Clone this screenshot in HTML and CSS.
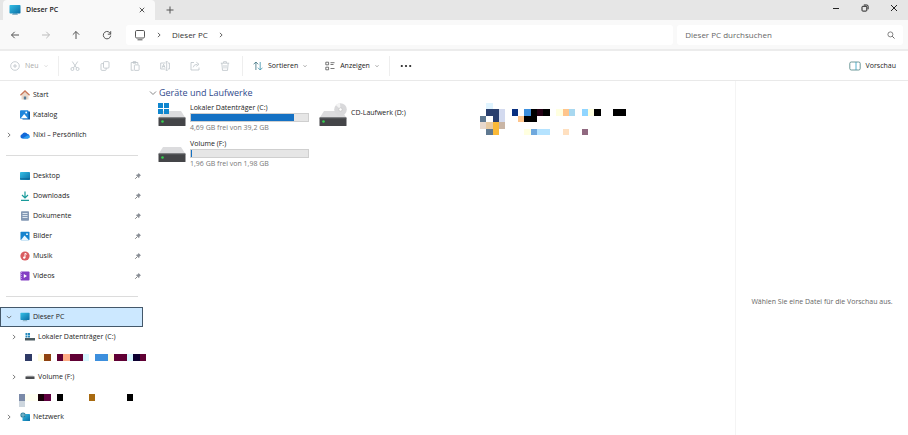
FILE: index.html
```html
<!DOCTYPE html>
<html lang="de">
<head>
    <meta charset="UTF-8">
    <meta name="viewport" content="width=device-width, initial-scale=1.0">
    <title>Dieser PC</title>
    <link rel="stylesheet" href="styles.css">
</head>
<body>
    <!-- Shared icons -->
    <svg class="sprite" aria-hidden="true">
        <defs>
            <linearGradient id="screen" x1="0" y1="0" x2="1" y2="1">
                <stop offset="0" stop-color="#35c0e6"/>
                <stop offset="1" stop-color="#0a6ea6"/>
            </linearGradient>
            <symbol id="pc" viewBox="0 0 12 12">
                <path d="M4 9h4l1 2H3z" fill="#8fb5c8"/>
                <rect x="0.5" y="1" width="11" height="8.5" rx="0.8" fill="url(#screen)"/>
            </symbol>
            <symbol id="chevron-right" viewBox="0 0 8 8">
                <path d="M2.500 1.200 5.500 4 2.500 6.800" fill="none" stroke="currentColor"/>
            </symbol>
            <symbol id="chevron-down" viewBox="0 0 8 8">
                <path d="M1 2.500 4 5.500 7 2.500" fill="none" stroke="currentColor"/>
            </symbol>
            <symbol id="close" viewBox="0 0 8 8">
                <path d="M1 1l6 6M7 1 1 7" fill="none" stroke="currentColor"/>
            </symbol>
            <symbol id="pin" viewBox="0 0 8 8">
                <path d="M4.600 1 7 3.400 5.800 4 5 6.200 1.800 3 4 2.200z" fill="#8a8f96"/>
                <path d="M3.200 4.800 1.200 6.800" stroke="#666" stroke-width="0.800"/>
            </symbol>
            <symbol id="drive" viewBox="0 0 28 16">
                <path d="M5 0h18l4.500 7H.5z" fill="#dcdcde"/>
                <rect x="0.500" y="6.500" width="27" height="8.500" rx="0.600" fill="#444548"/>
                <path d="M.5 7h27" stroke="#66686b" stroke-width="0.800"/>
                <circle cx="4.500" cy="10.500" r="1.300" fill="#35d04f"/>
            </symbol>
            <symbol id="windows" viewBox="0 0 11 11">
                <path d="M0 0h5v5H0zM6 0h5v5H6zM0 6h5v5H0zM6 6h5v5H6z" fill="#0f86cf"/>
            </symbol>
        </defs>
    </svg>

    <div class="explorer">
        <header>
            <div class="titlebar">
                <div class="tab">
                    <svg class="icon-12"><use href="#pc"/></svg>
                    <span class="tab-title">Dieser PC</span>
                    <button class="tab-close" aria-label="Tab schließen"><svg class="icon-6"><use href="#close"/></svg></button>
                </div>
                <button class="tab-new" aria-label="Neuer Tab">
                    <svg class="icon-8" viewBox="0 0 8 8"><path d="M4 .5v7M.5 4h7" stroke="#555"/></svg>
                </button>
                <div class="window-buttons">
                    <button aria-label="Minimieren"><svg class="icon-8" viewBox="0 0 8 8"><path d="M1 4.500h6" stroke="#222"/></svg></button>
                    <button aria-label="Verkleinern"><svg class="icon-8" viewBox="0 0 8 8"><rect x="1" y="2.300" width="4.800" height="4.800" rx="0.800" fill="none" stroke="#222"/><path d="M2.800 1h3q1.300 0 1.300 1.300v3" fill="none" stroke="#222"/></svg></button>
                    <button aria-label="Schließen"><svg class="icon-8"><use href="#close"/></svg></button>
                </div>
            </div>

            <div class="navbar">
                <div class="nav-buttons">
                    <button aria-label="Zurück"><svg class="icon-10" viewBox="0 0 10 10"><path d="M9 5H1.500M4.700 1.800 1.500 5l3.200 3.200"/></svg></button>
                    <button aria-label="Vorwärts" disabled><svg class="icon-10" viewBox="0 0 10 10"><path d="M1 5h7.500M5.300 1.800 8.500 5 5.300 8.200"/></svg></button>
                    <button aria-label="Nach oben"><svg class="icon-10" viewBox="0 0 10 10"><path d="M5 9V1.500M1.800 4.700 5 1.500l3.200 3.200"/></svg></button>
                    <button aria-label="Aktualisieren"><svg class="icon-10" viewBox="0 0 10 10"><path d="M8.600 4.200A3.700 3.700 0 1 0 8.700 5.600M8.700 1.200v3H5.800"/></svg></button>
                </div>
                <nav class="address" aria-label="Pfad">
                    <svg class="icon-12" viewBox="0 0 12 12"><rect x="1.500" y="1.500" width="9" height="7.500" rx="1.200" fill="none" stroke="#555"/><path d="M3.500 10.800h5" stroke="#555"/></svg>
                    <svg class="icon-6"><use href="#chevron-right"/></svg>
                    <a href="#">Dieser PC</a>
                    <svg class="icon-6"><use href="#chevron-right"/></svg>
                </nav>
                <div class="search">
                    <input type="search" placeholder="Dieser PC durchsuchen" aria-label="Dieser PC durchsuchen">
                    <svg class="icon-8" viewBox="0 0 8 8"><circle cx="3.400" cy="3.400" r="2.500" fill="none" stroke="#666" stroke-width="0.800"/><path d="M5.200 5.200 7.500 7.500" stroke="#666"/></svg>
                </div>
            </div>

            <div class="toolbar">
                <button class="tool tool-new" disabled>
                    <svg class="icon-10" viewBox="0 0 10 10"><circle cx="5" cy="5" r="4.300"/><path d="M5 3v4M3 5h4"/></svg>
                    Neu
                    <svg class="icon-4"><use href="#chevron-down"/></svg>
                </button>
                <div class="tool-group">
                    <button class="tool" aria-label="Ausschneiden" disabled><svg class="icon-10" viewBox="0 0 10 10"><path d="M2.300.5 6.600 7M7.700.5 3.400 7"/><circle cx="2.400" cy="8" r="1.500"/><circle cx="7.600" cy="8" r="1.500"/></svg></button>
                    <button class="tool" aria-label="Kopieren" disabled><svg class="icon-10" viewBox="0 0 10 10"><rect x="3.500" y="0.600" width="5.500" height="6.500" rx="1"/><path d="M3.500 2.600H1.800q-.8 0-.8.8v5q0 1 1 1h3.200q1 0 1-1V7.100"/></svg></button>
                    <button class="tool" aria-label="Einfügen" disabled><svg class="icon-10" viewBox="0 0 10 10"><path d="M3.600 9.300H1.200V1.500h6.600v1.800M3.200.6h2.600v1.600H3.200z"/><rect x="4.400" y="3.900" width="4.700" height="5.500" rx="0.600"/></svg></button>
                    <button class="tool" aria-label="Umbenennen" disabled><svg class="icon-10" viewBox="0 0 10 10"><path d="M5.500 2H.7v6h4.800M8 2h1.400v6H8M6.700.7v8.600M5.700.7h2M5.700 9.300h2M2.200 6.700l1.400-3.400L5 6.700M2.700 5.600h1.800"/></svg></button>
                    <button class="tool" aria-label="Freigeben" disabled><svg class="icon-10" viewBox="0 0 10 10"><path d="M4 1.500H1v7.500h8V6.500M3.200 6.300q.4-3 4.200-3M6.300 1.200l2.700 2.100-2.700 2"/></svg></button>
                    <button class="tool" aria-label="Löschen" disabled><svg class="icon-10" viewBox="0 0 10 10"><path d="M.8 2.200h8.400M3.600 2V.7h2.800V2M1.800 2.200l.7 7.200h5l.7-7.200M4 4v3.500M6 4v3.500"/></svg></button>
                </div>
                <div class="tool-menus">
                    <button class="tool">
                        <svg class="icon-10" viewBox="0 0 10 10"><path d="M2.900 9V1M.6 3.300 2.900 1l2.300 2.300" stroke="#3a6f7c"/><path d="M7.200 1v8M4.900 6.700 7.200 9l2.300-2.300" stroke="#3c93ad"/></svg>
                        Sortieren
                        <svg class="icon-4"><use href="#chevron-down"/></svg>
                    </button>
                    <button class="tool">
                        <svg class="icon-10" viewBox="0 0 10 10"><path d="M.8 1.200h2.800v2.600H.8zM.8 6.200h2.800v2.600H.8zM5.500 1.700h4M5.500 3.500h3M5.500 7.500h4"/></svg>
                        Anzeigen
                        <svg class="icon-4"><use href="#chevron-down"/></svg>
                    </button>
                </div>
                <button class="tool tool-more" aria-label="Mehr anzeigen">
                    <svg class="icon-12" viewBox="0 0 12 12"><g fill="#222" stroke="none"><circle cx="1.800" cy="6" r="1.100"/><circle cx="6" cy="6" r="1.100"/><circle cx="10.200" cy="6" r="1.100"/></g></svg>
                </button>
                <button class="tool tool-preview">
                    <svg class="icon-12" viewBox="0 0 12 12"><rect x="0.800" y="2" width="10.400" height="8" rx="1.500" stroke="#4a8080"/><path d="M7 2v8" stroke="#2c9fc0"/></svg>
                    Vorschau
                </button>
            </div>
        </header>

        <div class="content">
            <nav class="sidebar" aria-label="Navigationsbereich">
                <ul>
                    <li><a href="#"><span class="expander"></span>
                        <svg class="icon-10" viewBox="0 0 10 10"><path d="M1.500 4.500 5 1.500l3.500 3v5h-7z" fill="#ead9cc"/><path d="M.4 5.200 5 1l4.600 4.200" fill="none" stroke="#c8785a" stroke-width="1.300"/><path d="M3.800 9.500v-3h2.400v3z" fill="#587c98"/></svg>
                        Start</a></li>
                    <li><a href="#"><span class="expander"></span>
                        <svg class="icon-10" viewBox="0 0 10 10"><path d="M2.500 1.500H10v8H2.500z" fill="#0b57a0"/><rect y="0.300" width="8.500" height="8.500" rx="1" fill="#1f86dc"/><path d="M.8 8.200 4.200 4l3.500 4.200z" fill="#fff"/><circle cx="6.200" cy="2.500" r="0.900" fill="#fff"/></svg>
                        Katalog</a></li>
                    <li><a href="#"><span class="expander"><svg class="icon-6"><use href="#chevron-right"/></svg></span>
                        <svg class="icon-10" viewBox="0 0 10 10"><path d="M2.300 8.500a2.200 2.200 0 0 1-.2-4.300A3 3 0 0 1 7.500 4a2.300 2.300 0 0 1 .4 4.500z" fill="#1268d8"/><path d="M2.300 8.500 7.600 5.300q2 .2 2.300 1.700-.3 1.400-2 1.500z" fill="#2b9df0"/></svg>
                        Nixi – Persönlich</a></li>
                </ul>
                <ul>
                    <li><a href="#"><span class="expander"></span>
                        <svg class="icon-10" viewBox="0 0 10 10"><rect y="1" width="10" height="8" rx="0.800" fill="url(#screen)"/><path d="M0 7.800h10" stroke="#0b608e" stroke-width="0.800"/></svg>
                        Desktop<svg class="icon-8 pin"><use href="#pin"/></svg></a></li>
                    <li><a href="#"><span class="expander"></span>
                        <svg class="icon-10" viewBox="0 0 10 10"><path d="M5 .5v6.300M2 4l3 3 3-3M1 9.300h8" fill="none" stroke="#199a9a" stroke-width="1.200"/></svg>
                        Downloads<svg class="icon-8 pin"><use href="#pin"/></svg></a></li>
                    <li><a href="#"><span class="expander"></span>
                        <svg class="icon-10" viewBox="0 0 10 10"><rect x="1" y="0.300" width="8" height="9.400" rx="0.800" fill="#8398b4"/><path d="M2.500 2.500h5M2.500 4.500h5M2.500 6.500h5" stroke="#e5edf5" stroke-width="0.900"/></svg>
                        Dokumente<svg class="icon-8 pin"><use href="#pin"/></svg></a></li>
                    <li><a href="#"><span class="expander"></span>
                        <svg class="icon-10" viewBox="0 0 10 10"><rect x="0.500" y="0.800" width="9" height="8.400" rx="0.800" fill="#1583ce"/><path d="M.8 9.200 4.500 4.500 9 9.200z" fill="#e8f6ff"/><circle cx="7" cy="3.200" r="0.900" fill="#fff"/></svg>
                        Bilder<svg class="icon-8 pin"><use href="#pin"/></svg></a></li>
                    <li><a href="#"><span class="expander"></span>
                        <svg class="icon-10" viewBox="0 0 10 10"><circle cx="5" cy="5" r="4.600" fill="#d95c60"/><path d="M5 6.600V2.300l1.800 1" fill="none" stroke="#fff"/><circle cx="4.200" cy="6.600" r="1.200" fill="#fff"/></svg>
                        Musik<svg class="icon-8 pin"><use href="#pin"/></svg></a></li>
                    <li><a href="#"><span class="expander"></span>
                        <svg class="icon-10" viewBox="0 0 10 10"><rect x="0.500" y="0.500" width="9" height="9" rx="0.800" fill="#8440c4"/><path d="M3.800 3v4l3.200-2z" fill="#fff"/><path d="M1.500 1v8" stroke="#b98ae8" stroke-dasharray="1 1"/></svg>
                        Videos<svg class="icon-8 pin"><use href="#pin"/></svg></a></li>
                </ul>
                <ul>
                    <li><a href="#" class="selected" aria-current="page"><span class="expander"><svg class="icon-6"><use href="#chevron-down"/></svg></span>
                        <svg class="icon-10"><use href="#pc"/></svg>
                        Dieser PC</a></li>
                    <li><a href="#" class="child"><span class="expander"><svg class="icon-6"><use href="#chevron-right"/></svg></span>
                        <svg class="icon-10" viewBox="0 0 10 10"><path d="M.5 1h2v2h-2zM3 1h2v2H3zM.5 3.500h2v2h-2zM3 3.500h2v2H3z" fill="#2489bd"/><rect y="6" width="10" height="2.500" fill="#4a5a60"/></svg>
                        Lokaler Datenträger (C:)</a></li>
                    <li class="masked">
                        <svg class="mosaic-row" viewBox="0 0 20 2" aria-hidden="true" shape-rendering="crispEdges">
                            <path d="M1 0h1v1H1z" fill="#2f3a66"/><path d="M3 0h1v1H3zM14 0h1v1h-1z" fill="#fffce0"/>
                            <path d="M4 0h1v1H4z" fill="#8f4210"/><path d="M6 0h1v1H6zM8 0h2v1H8zM15 0h2v1h-2zM19 0h1v1h-1z" fill="#600034"/>
                            <path d="M7 0h1v1H7z" fill="#ffac84"/><path d="M10 0h1v1h-1zM17 0h1v1h-1z" fill="#d6f6ff"/>
                            <path d="M12 0h2v1h-2z" fill="#3d8fdd"/><path d="M18 0h1v1h-1z" fill="#0e0030"/>
                        </svg>
                    </li>
                    <li><a href="#" class="child"><span class="expander"><svg class="icon-6"><use href="#chevron-right"/></svg></span>
                        <svg class="icon-10" viewBox="0 0 10 10"><path d="M2 3.500h6l1.500 1.500h-9z" fill="#d0d0d2"/><rect x="0.500" y="4.500" width="9" height="2.500" fill="#4a4c50"/></svg>
                        Volume (F:)</a></li>
                    <li class="masked">
                        <svg class="mosaic-row" viewBox="0 0 20 2" aria-hidden="true" shape-rendering="crispEdges">
                            <path d="M0 0h1v1H0z" fill="#7b8aa8"/><path d="M0 1h1v1H0z" fill="#cdd6de"/>
                            <path d="M1 0h2v1H1z" fill="#fffff2"/><path d="M3 0h1v1H3z" fill="#180008"/><path d="M4 0h1v1H4z" fill="#600040"/>
                            <path d="M6 0h1v1H6zM17 0h1v1h-1z" fill="#000"/><path d="M11 0h1v1h-1z" fill="#a86a10"/>
                        </svg>
                    </li>
                    <li><a href="#"><span class="expander"><svg class="icon-6"><use href="#chevron-right"/></svg></span>
                        <svg class="icon-10" viewBox="0 0 10 10"><rect x="2.500" y="2" width="7.500" height="7" rx="0.600" fill="url(#screen)"/><circle cx="3" cy="3" r="2.600" fill="#2f7d9c"/><path d="M.5 3h5M3 .5v5" stroke="#a8e0ee" stroke-width="0.600"/></svg>
                        Netzwerk</a></li>
                </ul>
            </nav>

            <main>
                <h1 class="group-title"><svg class="icon-8"><use href="#chevron-down"/></svg>Geräte und Laufwerke</h1>
                <div class="drives">
                    <article class="drive">
                        <svg class="drive-icon" viewBox="0 0 28 26"><use href="#drive" y="8" width="28" height="16"/><use href="#windows" width="11" height="11"/></svg>
                        <div class="drive-info">
                            <h2>Lokaler Datenträger (C:)</h2>
                            <div class="usage"><div class="usage-fill" style="width: 88%"></div></div>
                            <p>4,69 GB frei von 39,2 GB</p>
                        </div>
                    </article>
                    <article class="drive drive-plain">
                        <svg class="drive-icon" viewBox="0 0 28 26"><use href="#drive" y="8" width="28" height="16"/><circle cx="21.500" cy="6.500" r="6.300" fill="#d9d9db"/><path d="M21.500 6.500 17 2.200A6.300 6.300 0 0 1 21 .2z" fill="#f4f4f4"/><circle cx="21.500" cy="6.500" r="1.700" fill="#fff" stroke="#bbb" stroke-width="0.600"/></svg>
                        <div class="drive-info">
                            <h2>CD-Laufwerk (D:)</h2>
                        </div>
                    </article>
                    <div class="drive">
                        <svg class="mosaic-drive" viewBox="0 0 23 5" aria-hidden="true" shape-rendering="crispEdges">
                            <path d="M1 0h1v1H1z" fill="#e0f4ff"/><path d="M1 1h2v1H1zM2 2h1v1H2z" fill="#2a3f6e"/>
                            <path d="M3 1h1v2H3z" fill="#d3daef"/><path d="M0 2h1v1H0zM1 4h1v1H1z" fill="#5f7890"/>
                            <path d="M0 3h1v1H0z" fill="#e8d8cc"/><path d="M1 3h1v1H1z" fill="#e8caa2"/>
                            <path d="M2 3h1v2H2z" fill="#fab938"/><path d="M3 3h1v1H3z" fill="#c9b5a5"/>
                            <path d="M5 1h1v1H5z" fill="#0a3080"/><path d="M7 1h1v1H7z" fill="#3d8fdd"/>
                            <path d="M8 1h1v1H8zM10 1h1v1h-1zM7 2h2v1H7zM18 1h1v1h-1zM21 1h2v1h-2z" fill="#000"/>
                            <path d="M9 1h1v1H9z" fill="#240014"/><path d="M12 1h1v1h-1zM17 1h1v1h-1zM7 4h1v1H7z" fill="#ffffe0"/>
                            <path d="M13 1h1v1h-1zM6 2h1v1H6z" fill="#ffc58c"/><path d="M14 1h1v1h-1z" fill="#a8d8f0"/>
                            <path d="M16 1h1v1h-1z" fill="#90d5ff"/><path d="M8 4h1v1H8z" fill="#6fa8dd"/>
                            <path d="M9 4h2v1H9z" fill="#b5e3ff"/><path d="M13 4h1v1h-1z" fill="#ffe0c0"/><path d="M16 4h1v1h-1z" fill="#906880"/>
                        </svg>
                    </div>
                    <article class="drive">
                        <svg class="drive-icon" viewBox="0 0 28 26"><use href="#drive" y="8" width="28" height="16"/></svg>
                        <div class="drive-info">
                            <h2>Volume (F:)</h2>
                            <div class="usage"><div class="usage-fill" style="width: 1%"></div></div>
                            <p>1,96 GB frei von 1,98 GB</p>
                        </div>
                    </article>
                </div>
            </main>

            <aside class="preview">
                <p>Wählen Sie eine Datei für die Vorschau aus.</p>
            </aside>
        </div>
    </div>
</body>
</html>
```
FILE: styles.css
```css
/* Basic reset */
* {
    box-sizing: border-box;
}

body {
    margin: 0;
    background-color: #fff;
    color: #222;
    font-family: "Open Sans", "Noto Sans", sans-serif;
    font-size: 7px;
    line-height: 10px;
}

h1, h2, p, ul {
    margin: 0;
    padding: 0;
    font-size: 7px;
    font-weight: normal;
}

ul {
    list-style: none;
}

a {
    color: inherit;
    text-decoration: none;
}

button {
    display: flex;
    align-items: center;
    justify-content: center;
    padding: 0;
    border: none;
    background: none;
    color: #222;
    font: inherit;
}

svg {
    display: block;
    flex: none;
}

.sprite {
    position: absolute;
    width: 0;
    height: 0;
}

/* Icon sizes */
.icon-4 { width: 4px; height: 4px; }
.icon-6 { width: 6px; height: 6px; }
.icon-8 { width: 8px; height: 8px; }
.icon-10 { width: 10px; height: 10px; }
.icon-12 { width: 12px; height: 12px; }

.explorer {
    display: flex;
    flex-direction: column;
    min-height: 100vh;
}

/* Title bar */
.titlebar {
    display: flex;
    height: 20px;
    padding-left: 3px;
    background-color: #e6e6e6;
}

.tab {
    display: flex;
    align-items: center;
    gap: 5px;
    width: 152px;
    padding: 0 10px 0 6px;
    border-radius: 4px 4px 0 0;
    background-color: #f9f9f9;
}

.tab-title {
    flex: 1;
    font-weight: 600;
}

.tab-new {
    width: 30px;
}

.window-buttons {
    display: flex;
    margin-left: auto;
}

.window-buttons button {
    width: 29px;
    height: 16px;
}

/* Navigation bar */
.navbar {
    display: flex;
    gap: 4px;
    height: 31px;
    padding: 5px 5px 4px 0;
    border-bottom: 2px solid #ececec;
    background-color: #f9f9f9;
}

.nav-buttons {
    display: flex;
    width: 122px;
}

.nav-buttons button {
    flex: 1;
}

.nav-buttons path {
    fill: none;
    stroke: #555;
}

.nav-buttons button:disabled path {
    stroke: #bbb;
}

.address, .search {
    display: flex;
    align-items: center;
    border-radius: 3px;
    background-color: #fff;
    font-size: 8px;
}

.address {
    flex: 1;
    gap: 10px;
    padding-left: 8px;
    color: #333;
}

.search {
    width: 25%;
    padding: 0 8px;
}

.search input {
    flex: 1;
    min-width: 0;
    padding: 0;
    border: none;
    outline: none;
    background: none;
    font: inherit;
}

.search input::placeholder {
    color: #666;
}

/* Toolbar */
.toolbar {
    display: flex;
    align-items: center;
    height: 30px;
    padding: 0 12px 0 10px;
    border-bottom: 1px solid #e9e9e9;
}

.tool {
    gap: 5px;
    height: 20px;
}

.tool svg {
    fill: none;
    stroke: #555;
    stroke-width: 0.8;
}

.tool:disabled {
    color: #aaa;
}

.tool:disabled svg {
    stroke: #bbc3c8;
}

.tool-new {
    width: 48px;
    justify-content: flex-start;
}

.tool-group {
    display: flex;
    padding: 0 2px 0 1px;
    border: solid #eee;
    border-width: 0 1px;
}

.tool-group .tool {
    width: 30px;
}

.tool-menus {
    display: flex;
    gap: 18px;
    padding: 0 10px;
    border-right: 1px solid #eee;
}

.tool-more {
    width: 32px;
}

.tool-preview {
    margin-left: auto;
}

/* Content */
.content {
    display: flex;
    flex: 1;
}

/* Sidebar */
.sidebar {
    width: 147px;
    padding-top: 4px;
}

.sidebar ul + ul {
    margin-top: 21px;
}

.sidebar ul + ul::before {
    content: "";
    display: block;
    height: 1px;
    margin: -11px 9px 10px 6px;
    background-color: #dcdcdc;
}

.sidebar a {
    display: flex;
    align-items: center;
    gap: 3px;
    height: 20px;
    margin-right: 4px;
    border: 1px solid transparent;
}

.sidebar a.child {
    padding-left: 5px;
}

.sidebar a.selected {
    border-color: #44586a;
    background-color: #cce8ff;
}

.expander {
    display: flex;
    justify-content: center;
    width: 16px;
    color: #555;
}

.pin {
    margin-left: auto;
}

.masked {
    height: 20px;
    padding: 7px 0 0 19px;
}

.mosaic-row {
    width: 127px;
    height: 13px;
}

/* Drives */
main {
    flex: 1;
    padding: 6px 0 0 2px;
}

.group-title {
    display: flex;
    align-items: center;
    gap: 2px;
    height: 12px;
    color: #2f4a8c;
    font-size: 9px;
}

.group-title svg {
    color: #888;
}

.drives {
    display: grid;
    grid-template-columns: repeat(auto-fill, 151px);
    gap: 6px 10px;
    padding: 4px 0 0 9px;
}

.drive {
    display: flex;
    gap: 4px;
    height: 30px;
}

.drive-plain h2 {
    padding-top: 5px;
}

.drive-icon {
    width: 28px;
    height: 26px;
}

.drive-info {
    flex: 1;
}

.usage {
    height: 9px;
    margin-bottom: 1px;
    border: 1px solid #cfcfcf;
    background-color: #e6e6e6;
}

.usage-fill {
    min-width: 1px;
    height: 100%;
    background-color: #1471c4;
}

.drive p {
    color: #777;
}

.mosaic-drive {
    width: 146px;
    height: 32px;
}

/* Preview */
.preview {
    display: flex;
    align-items: center;
    justify-content: center;
    width: 173px;
    padding-top: 88px;
    border-left: 1px solid #f4f4f4;
    color: #666;
}
```
